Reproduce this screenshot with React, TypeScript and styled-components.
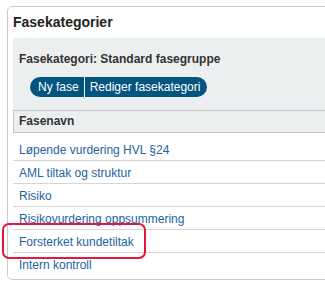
import styled, { createGlobalStyle } from 'styled-components';

const GlobalStyle = createGlobalStyle`
    html, body {
        margin: 0;
        padding: 0;
        background: #ffffff;
        overflow: hidden;
    }
    body {
        font-family: "Liberation Sans", Arial, sans-serif;
    }
`;

const phases = [
    'Løpende vurdering HVL §24',
    'AML tiltak og struktur',
    'Risiko',
    'Risikovurdering oppsummering',
    'Forsterket kundetiltak',
    'Intern kontroll',
];

export default function App() {
    return (
        <>
            <GlobalStyle />
            <Page>
                <Panel>
                    <Title>Fasekategorier</Title>
                    <Toolbar>
                        <CategoryLabel>Fasekategori: Standard fasegruppe</CategoryLabel>
                        <ButtonGroup>
                            <PillButton $first>Ny fase</PillButton>
                            <PillButton>Rediger fasekategori</PillButton>
                        </ButtonGroup>
                    </Toolbar>
                    <HeaderRow>Fasenavn</HeaderRow>
                    <Rows>
                        {phases.map((name, i) => (
                            <Row key={name} $first={i === 0} $highlight={name === 'Forsterket kundetiltak'}>
                                <PhaseLink>{name}</PhaseLink>
                            </Row>
                        ))}
                    </Rows>
                </Panel>
            </Page>
        </>
    );
}

const Page = styled.div`
    padding: 6px 0 0 7px;
    width: 420px;
`;

const Panel = styled.div`
    border: 1px solid #c9cbcc;
    border-radius: 5px;
    padding: 0 5px 3px 5px;
`;

const Title = styled.div`
    height: 31px;
    line-height: 30px;
    font-size: 14px;
    font-weight: bold;
    color: #222;
`;

const Toolbar = styled.div`
    background: #eceff0;
    padding: 14px 6px 13px 6px;
    display: flex;
    flex-direction: column;
    gap: 11px;
`;

const CategoryLabel = styled.div`
    font-size: 12px;
    font-weight: bold;
    color: #333;
    line-height: 14px;
`;

const ButtonGroup = styled.div`
    display: flex;
    margin-left: 11px;
`;

const PillButton = styled.button<{ $first?: boolean }>`
    height: 20px;
    border: none;
    background: #03557f;
    color: #ffffff;
    font-family: "Liberation Sans", Arial, sans-serif;
    font-size: 12px;
    padding: ${({ $first }) => ($first ? '0 5px 0 8px' : '0 7px 0 5px')};
    border-radius: ${({ $first }) => ($first ? '10px 0 0 10px' : '0 10px 10px 0')};
    border-left: ${({ $first }) => ($first ? 'none' : '1px solid #ffffff')};
`;

const HeaderRow = styled.div`
    background: #eceff0;
    border-top: 1px solid #c3c6c8;
    border-bottom: 1px solid #c3c6c8;
    border-left: 1px solid #c3c6c8;
    height: 21px;
    line-height: 21px;
    padding-left: 5px;
    font-size: 12px;
    font-weight: bold;
    color: #333;
`;

const Rows = styled.div`
    display: flex;
    flex-direction: column;
`;

const Row = styled.div<{ $first?: boolean; $highlight?: boolean }>`
    position: relative;
    box-sizing: border-box;
    height: ${({ $first }) => ($first ? '28px' : '23px')};
    padding-top: ${({ $first }) => ($first ? '5px' : '0')};
    line-height: 22px;
    padding-left: 6px;
    border-bottom: 1px solid #d3d5d6;
    &:last-child {
        border-bottom: none;
    }
    ${({ $highlight }) =>
        $highlight &&
        `
        &::after {
            content: '';
            position: absolute;
            left: -11px;
            top: -7px;
            width: 140px;
            height: 32px;
            border: 2px solid #e4163f;
            border-radius: 7px;
        }
    `}
`;

const PhaseLink = styled.a`
    font-size: 12px;
    color: #1d64a0;
    text-decoration: none;
    cursor: pointer;
`;
